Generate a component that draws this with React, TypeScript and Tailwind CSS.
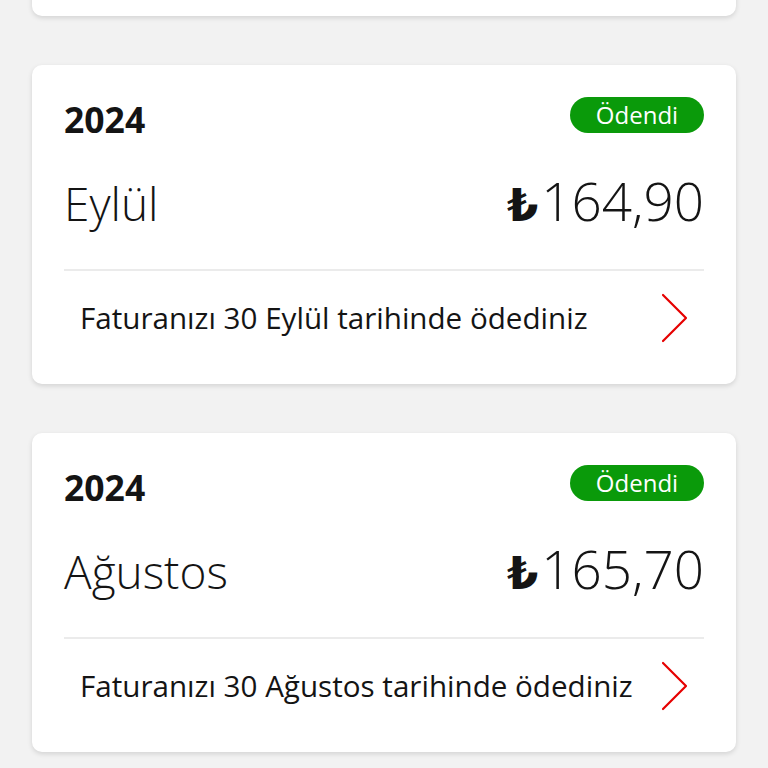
const bills = [
  { year: "2024", month: "Ekim", amount: "164,90", date: "30 Ekim" },
  { year: "2024", month: "Eylül", amount: "164,90", date: "30 Eylül" },
  { year: "2024", month: "Ağustos", amount: "165,70", date: "30 Ağustos" },
];

function Chevron() {
  return (
    <svg width="28" height="50" viewBox="0 0 28 50" fill="none" aria-hidden>
      <path
        d="M3 2 L26 25 L3 48"
        stroke="#e60000"
        strokeWidth="2.2"
        strokeLinecap="round"
        strokeLinejoin="round"
      />
    </svg>
  );
}

function BillCard({ year, month, amount, date }: (typeof bills)[number]) {
  return (
    <div className="rounded-[10px] bg-white px-8 pt-8 pb-[20px] shadow-[0_2px_5px_rgba(0,0,0,0.13)]">
      <div className="flex h-[36px] items-start justify-between">
        <span className="mt-[5px] text-[35.5px] leading-none font-bold text-[#141414]">{year}</span>
        <span className="flex h-[36px] w-[134px] items-center justify-center rounded-full bg-[#0a9a0a] text-[24px] leading-none text-white">
          Ödendi
        </span>
      </div>

      <div className="mt-[41px] flex items-baseline justify-between text-[#141414]">
        <span className="text-[46px] leading-none font-light">{month}</span>
        <span className="text-[53px] leading-none font-light">
          <span className="mr-[3px] text-[45px] font-bold">₺</span>
          {amount}
        </span>
      </div>

      <div className="mt-[42px] h-[2px] bg-[#ebebeb]" />

      <div className="flex h-[93px] items-center justify-between px-4">
        <span className="text-[29.6px] leading-none text-[#141414]">
          Faturanızı {date} tarihinde ödediniz
        </span>
        <Chevron />
      </div>
    </div>
  );
}

export default function App() {
  return (
    <div className="h-[768px] overflow-hidden bg-[#f2f2f2] font-['Open_Sans','DejaVu_Sans',sans-serif]">
      <div className="-mt-[303px] flex flex-col gap-[49px] px-8">
        {bills.map((b) => (
          <BillCard key={b.month} {...b} />
        ))}
      </div>
    </div>
  );
}
